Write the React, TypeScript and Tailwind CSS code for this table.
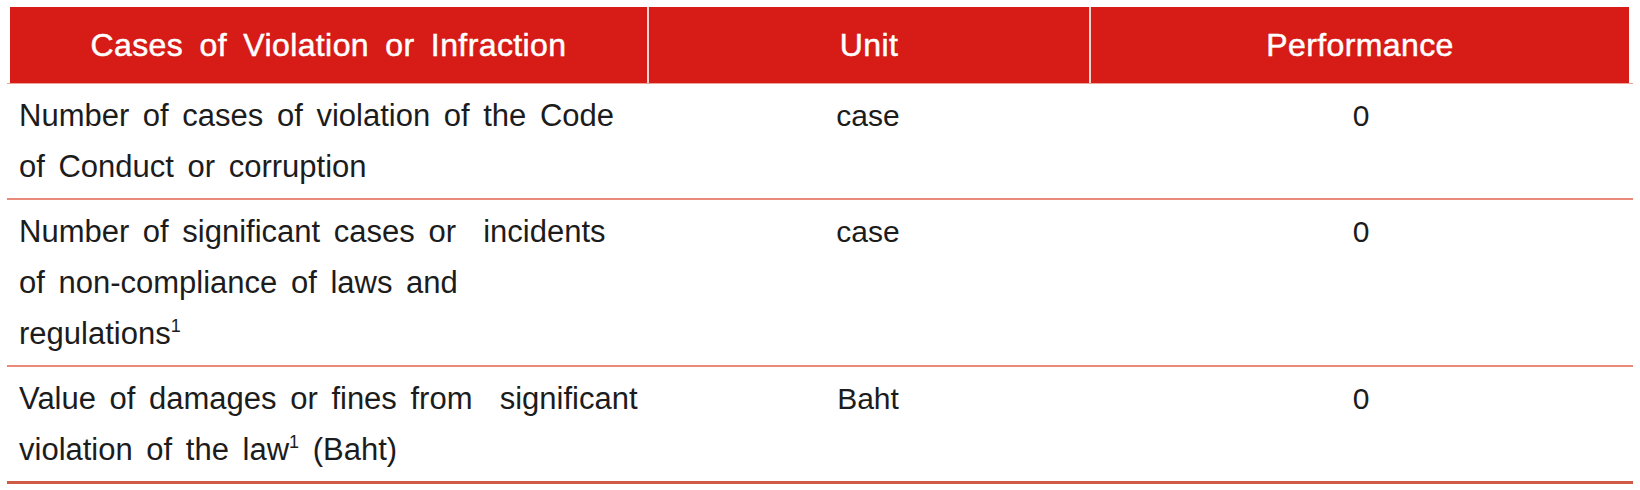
const Sup = () => (
  <span className="relative -top-[12px] align-baseline text-[18px] leading-none">1</span>
)

const rows = [
  {
    lines: [
      <>Number of cases of violation of the Code</>,
      <>of Conduct or corruption</>,
    ],
    unit: "case",
    value: "0",
  },
  {
    lines: [
      <>Number of significant cases or{"\u00a0\u00a0"}incidents</>,
      <>of non-compliance of laws and</>,
      <>
        regulations<Sup />
      </>,
    ],
    unit: "case",
    value: "0",
  },
  {
    lines: [
      <>Value of damages or fines from{"\u00a0\u00a0"}significant</>,
      <>
        violation of the law<Sup /> (Baht)
      </>,
    ],
    unit: "Baht",
    value: "0",
  },
]

export default function App() {
  return (
    <div className="min-h-[490px] w-[1640px] bg-white pl-[7px] pt-[7px] font-['Liberation_Sans',Arial,sans-serif] text-[#1c1c1c]">
      <div className="flex w-[1626px] flex-col">
        <div className="ml-[3px] mr-[4px] grid h-[76px] grid-cols-[637px_442px_540px] bg-[#d71b17] text-[32px] tracking-[0.4px] text-white [-webkit-text-stroke:0.5px_white]">
          <div className="flex items-center justify-center [word-spacing:7px]">Cases of Violation or Infraction</div>
          <div className="flex items-center justify-center border-l-2 border-[#f3d6d2]">Unit</div>
          <div className="flex items-center justify-center border-l-2 border-[#f3d6d2]">Performance</div>
        </div>
        <div className="h-px bg-[#eea597]" />

        {rows.map((row, i) => (
          <div
            key={i}
            className={
              i === rows.length - 1
                ? "grid grid-cols-[640px_442px_544px] border-b-[3px] border-[#cf5a45] pb-[6px] pt-[6px] leading-[51px]"
                : "grid grid-cols-[640px_442px_544px] border-b-2 border-[#e9897a] pb-[6px] pt-[6px] leading-[51px]"
            }
          >
            <div className="whitespace-nowrap pl-[12px] text-[31px] [word-spacing:5px]">
              {row.lines.map((line, j) => (
                <div key={j}>{line}</div>
              ))}
            </div>
            <div className="text-center text-[30px]">{row.unit}</div>
            <div className="text-center text-[30px]">{row.value}</div>
          </div>
        ))}
      </div>
    </div>
  )
}
